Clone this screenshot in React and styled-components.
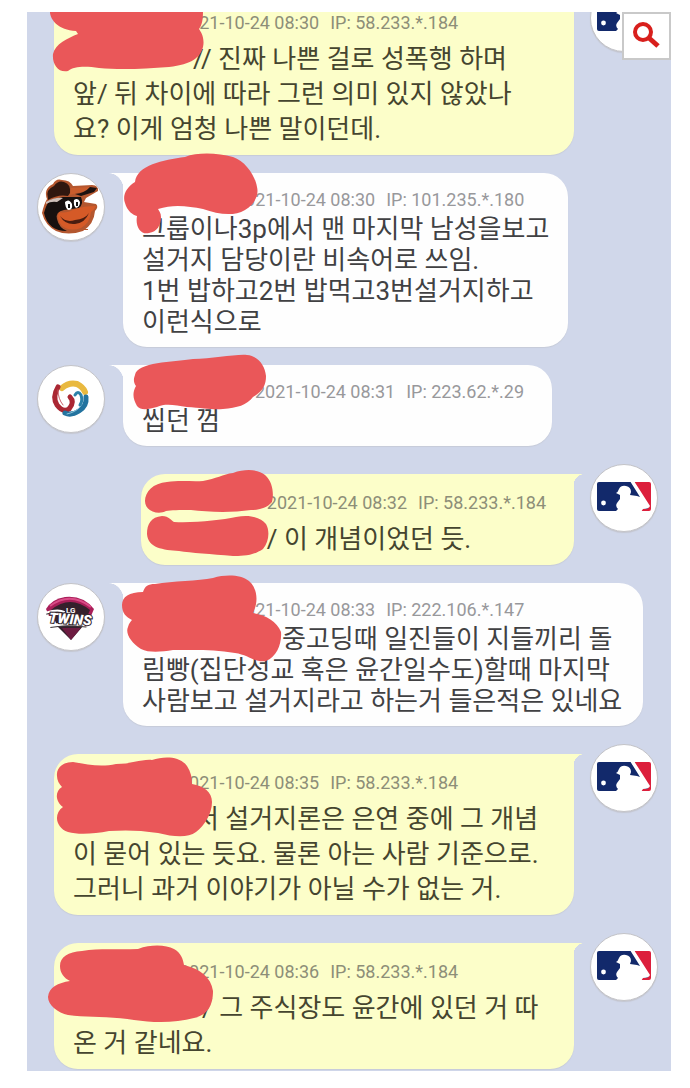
import React from "react";
import styled, { createGlobalStyle, css } from "styled-components";

const GlobalStyle = createGlobalStyle`
  * { box-sizing: border-box; }
  body {
    margin: 0;
    background: #fff;
    font-family: Roboto, "Noto Sans CJK KR", sans-serif;
  }
`;

const Page = styled.main`
  padding: 12px 19px 17px 27px;
`;

const Panel = styled.section`
  position: relative;
  overflow: hidden;
  background: #d0d7ea;
  padding-bottom: 2px;
`;

const Thread = styled.ul`
  display: flex;
  flex-direction: column;
  gap: 18px;
  list-style: none;
  margin: -28px 0 0;
  padding: 0;
`;

const Row = styled.li`
  display: flex;
  align-items: flex-start;
  flex-direction: ${(p) => (p.$mine ? "row-reverse" : "row")};
  gap: ${(p) => (p.$mine ? 16 : 18)}px;
  padding: 0 13px 0 10px;
`;

const Avatar = styled.span`
  flex: none;
  width: 68px;
  height: 68px;
  border-radius: 50%;
  overflow: hidden;
  background: #fff;
  border: 1px solid #c4c4c8;
  box-shadow: 0 1px 1px #c3c6d0;
  svg { display: block; margin: -1px; }
`;

const theirs = css`
  background: #fefefe;
  color: #414143;
  padding: 15px 19px 9px;
  line-height: 31px;
  border-radius: 0 24px 24px 24px;
  &::before {
    left: -14px;
    width: 15px;
    height: 18px;
    background: radial-gradient(ellipse 100% 100% at 0 100%, transparent 97%, #fefefe 100%);
  }
`;

const mine = css`
  background: #fcfec9;
  color: #45452f;
  padding: 17px 19px 8px;
  margin-top: 10px;
  line-height: 35px;
  border-radius: 24px 0 24px 24px;
  &::before {
    right: -10px;
    width: 11px;
    height: 13px;
    background: radial-gradient(ellipse 100% 100% at 100% 100%, transparent 97%, #fcfec9 100%);
  }
`;

const Bubble = styled.article`
  position: relative;
  flex: 0 1 ${(p) => (p.$wide ? "520px" : "auto")};
  font-size: 26px;
  box-shadow: 0 1px 1px #c6cbd9;
  &::before {
    content: "";
    position: absolute;
    top: 0;
  }
  ${(p) => (p.$mine ? mine : theirs)}
`;

const Meta = styled.header`
  display: flex;
  gap: 11px;
  margin-bottom: ${(p) => (p.$mine ? 7 : 2)}px;
  padding-right: 9px;
  font-size: 18px;
  line-height: 24px;
  color: ${(p) => (p.$mine ? "#8d8e78" : "#98989b")};
  white-space: nowrap;
`;

const HiddenName = styled.span`
  flex: none;
  width: ${(p) => p.$width}px;
  margin-right: -11px;
`;

const Body = styled.p`
  margin: 0;
`;

const HiddenWords = styled.span`
  display: inline-block;
  width: ${(p) => p.$width}px;
`;

const Marker = styled.svg`
  position: absolute;
  left: 0;
  top: 0;
  width: 160px;
  height: 90px;
  overflow: visible;
  fill: #ea5759;
`;

const ZoomButton = styled.button`
  position: absolute;
  top: 0;
  right: 0;
  width: 49px;
  height: 48px;
  display: grid;
  place-items: center;
  padding: 0;
  border: 2px solid #c9c9c9;
  background: #fff;
  cursor: pointer;
`;

const BatterLogo = () => (
  <svg width="68" height="68" viewBox="0 0 68 68" aria-hidden="true">
    <path d="M9 18H41L60 45Q59 47 57 47H9Q7 47 7 45V20Q7 18 9 18Z" fill="#12296b" />
    <path d="M44 18H59Q61 18 61 20V45Q61 47 59 47H50V45H57Q59 44 58 42Z" fill="#dc1f3c" />
    <path d="M40 17H44L60 42Q59 45 53 45L51 48H25L28 45Q25 42 27 39L30 35V31L26 29Q28 28 29 25Q31 21 36 22Q41 23 41 28L40 31L47 32L50 33Z" fill="#fff" />
    <circle cx="13.500" cy="39" r="2.400" fill="#fff" />
  </svg>
);

const BirdLogo = () => (
  <svg width="68" height="68" viewBox="0 0 68 68" aria-hidden="true">
    <path d="M5 40Q7 31 10 26Q6 16 16 11Q19 5 25 7Q33 7 36 13L55 12Q62 12 61 18L49 25L47 29L59 31Q62 34 58 38Q57 51 46 58Q31 63 19 58Q8 52 5 40Z" fill="#b4572f" />
    <path d="M7 40Q9 32 13 27L26 24L44 24Q47 31 42 35L27 37Q18 39 20 46Q22 55 30 58Q11 58 7 40Z" fill="#17100f" />
    <path d="M11 25Q8 17 17 13Q21 7 27 9Q34 11 33 20L31 23Q21 21 11 27Z" fill="#30170f" />
    <path d="M34 15L53 14Q49 19 40 20L33 22Z" fill="#c95c2c" />
    <path d="M53 14L60 15L57 19L44 23L38 21Q48 20 53 14Z" fill="#1d1210" />
    <path d="M9 29Q18 24 26 25L20 29Q14 28 9 31Z" fill="#cfc0ba" />
    <path d="M22 39Q29 41 38 36Q47 33 59 33Q57 37 54 39Q53 50 44 55Q33 59 25 53Q19 46 22 39Z" fill="#d55a27" />
    <path d="M23 43Q29 50 38 47Q48 46 52 40Q48 50 38 51Q28 52 23 43Z" fill="#4a1d10" />
    <path d="M28 29Q32 25 35 31Q36 37 31 37Q28 34 28 29ZM37 27Q41 24 43 29Q43 34 39 35Q36 32 37 27Z" fill="#fff" />
    <path d="M31 31h2v4h-2zM39 29h2v4h-2z" fill="#111" />
    <path d="M47 56h4v1h-4z" fill="#b4572f" />
  </svg>
);

const SwirlLogo = () => (
  <svg width="68" height="68" viewBox="0 0 68 68" fill="none" strokeLinecap="round" aria-hidden="true">
    <path d="M25 23Q32 17 40 19Q46 22 48 27" stroke="#e9b93f" strokeWidth="6" />
    <path d="M21 22Q15 32 20 40Q26 48 32 44Q38 37 33 32" stroke="#aa2733" strokeWidth="5" />
    <path d="M21 25Q21 34 26 40" stroke="#c9626b" strokeWidth="1" />
    <path d="M49 32Q50 41 42 46Q34 51 28 48" stroke="#23739f" strokeWidth="5" />
    <path d="M38 30Q41 25 44 30Q46 36 43 40" stroke="#2b81a9" strokeWidth="3" />
    <path d="M30 49Q39 47 43 42" stroke="#8cc5dc" strokeWidth="1" />
  </svg>
);

const TwinsLogo = () => (
  <svg width="68" height="68" viewBox="0 0 68 68" aria-hidden="true">
    <path d="M9 26Q15 16 28 14Q46 12 57 26L54 33H12Z" fill="#a91e59" />
    <path d="M14 27Q33 11 53 27L46 43L34 57L20 43Z" fill="#34202c" />
    <path d="M25 45H44L34 57Z" fill="#6d1b41" />
    <path d="M13 23Q33 8 54 24" fill="none" stroke="#d94b87" strokeWidth="2" />
    <text x="29" y="30" fill="#fff" fontSize="8" fontWeight="700">LG</text>
    <g transform="rotate(4 34 36)">
      <path d="M9 32Q20 27 27 30M12 46Q25 39 53 42" fill="none" stroke="#fff" strokeWidth="3" />
      <path d="M9 33Q20 28 27 31M14 46Q27 42 50 43" fill="none" stroke="#3c3439" strokeWidth="1" />
      <text x="12" y="41" fill="#fff" stroke="#35272f" strokeWidth="2" paintOrder="stroke" fontSize="14" fontWeight="900" fontStyle="italic">TWINS</text>
    </g>
  </svg>
);

const logos = { batter: BatterLogo, bird: BirdLogo, swirl: SwirlLogo, twins: TwinsLogo };

const comments = [
  {
    mine: true, wide: true, logo: "batter", time: "2021-10-24 08:30", ip: "58.233.*.184", name: 106, hidden: 120,
    lines: ["// 진짜 나쁜 걸로 성폭행 하며", "앞/ 뒤 차이에 따라 그런 의미 있지 않았나", "요? 이게 엄청 나쁜 말이던데."],
    marks: ["M-4 14V19C-3 26 4 36 22 37L24 40C14 44 1 50 -1 60C-2 70 4 79 14 77C20 72 32 72 45 74C65 76 90 75 115 73C138 70 146 64 149 53C151 44 147 38 145 35C149 30 149 22 149 14Z"],
  },
  {
    logo: "bird", time: "2021-10-24 08:30", ip: "101.235.*.180", name: 93,
    lines: ["그룹이나3p에서 맨 마지막 남성을보고", "설거지 담당이란 비속어로 쓰임.", "1번 밥하고2번 밥먹고3번설거지하고", "이런식으로"],
    marks: ["M12 9C4 14 -1 22 2 30C4 38 10 42 14 43C12 54 18 62 26 60C34 59 38 52 38 44C38 40 36 38 35 36C50 31 65 33 80 36C95 41 110 44 122 37C132 31 136 22 134 14C132 2 122 -12 110 -16C95 -20 75 -21 62 -16C40 -13 14 -8 12 9Z"],
  },
  {
    logo: "swirl", time: "2021-10-24 08:31", ip: "223.62.*.29", name: 113,
    lines: ["씹던 껌"],
    marks: ["M12 10C10 15 11 18 13 21C9 28 10 34 14 41C18 46 26 44 34 42C42 38 52 40 64 42C80 43 90 45 100 44C114 43 124 40 130 32C140 26 143 20 143 11C142 0 135 -9 124 -10C112 -11 90 -6 70 -6C50 -3 14 -3 12 10Z"],
  },
  {
    mine: true, logo: "batter", time: "2021-10-24 08:32", ip: "58.233.*.184", name: 107, hidden: 107,
    lines: ["/ 이 개념이었던 듯."],
    marks: [
      "M4 27C4 18 12 9 26 8C40 6 52 8 62 7C75 5 82 0 92 -1C106 -6 118 -4 124 1C132 8 133 20 131 28C126 34 118 36 110 36C90 39 66 38 50 36C38 36 30 36 25 37C18 41 4 38 4 27Z",
      "M6 60C6 50 10 43 21 42C28 42 31 47 33 48C55 49 80 46 95 43C110 40 120 44 125 50C129 57 128 68 122 75C112 82 100 82 92 82C70 80 50 79 38 77C22 76 7 74 6 60Z",
    ],
  },
  {
    wide: true, logo: "twins", time: "2021-10-24 08:33", ip: "222.106.*.147", name: 93, hidden: 140,
    lines: ["중고딩때 일진들이 지들끼리 돌", "림빵(집단성교 혹은 윤간일수도)할때 마지막", "사람보고 설거지라고 하는거 들은적은 있네요"],
    marks: ["M-1 22C-1 14 6 9 20 9C22 3 25 1 32 1C50 -2 75 -2 90 -5C104 -9 118 -8 126 -2C134 5 136 18 130 30C142 32 154 38 158 49C159 60 154 74 143 78C132 80 126 72 112 70C90 66 70 67 50 67C38 69 26 70 18 66C8 60 2 50 5 44C6 40 8 38 9 37C3 34 -1 30 -1 22Z"],
  },
  {
    mine: true, wide: true, logo: "batter", time: "2021-10-24 08:35", ip: "58.233.*.184", name: 106, hidden: 122,
    lines: ["서 설거지론은 은연 중에 그 개념", "이 묻어 있는 듯요. 물론 아는 사람 기준으로.", "그러니 과거 이야기가 아닐 수가 없는 거."],
    marks: ["M3 22C2 13 10 8 19 8C35 11 48 13 62 10C78 10 88 5 98 6C110 2 126 2 133 12C137 18 138 24 138 30C150 32 158 38 158 48C158 60 150 72 142 78C134 84 120 83 104 79C85 76 70 76 55 77C40 80 24 81 14 78C2 74 -1 60 9 53C2 48 0 38 8 33C5 30 3 26 3 22Z"],
  },
  {
    mine: true, wide: true, logo: "batter", time: "2021-10-24 08:36", ip: "58.233.*.184", name: 106, hidden: 129,
    lines: ["/ 그 주식장도 윤간에 있던 거 따", "온 거 같네요."],
    marks: ["M6 23C6 14 14 9 28 8C46 5 64 7 84 6C98 1 112 2 120 6C127 10 129 16 130 22C146 26 157 34 159 48C159 62 154 72 140 75C122 80 100 80 80 77C60 73 35 75 14 72C4 70 -6 62 -6 54C-5 44 4 40 16 38C10 35 6 30 6 23Z"],
  },
];

function Comment({ data }) {
  const Logo = logos[data.logo];
  return (
    <Row $mine={data.mine}>
      <Avatar><Logo /></Avatar>
      <Bubble $mine={data.mine} $wide={data.wide}>
        <Meta $mine={data.mine}>
          <HiddenName $width={data.name} />
          <time>{data.time}</time>
          <span>IP: {data.ip}</span>
        </Meta>
        <Body>
          {data.hidden && <HiddenWords $width={data.hidden} />}
          {data.lines.map((line, i) => (
            <React.Fragment key={line}>
              {i > 0 && <br />}
              {line}
            </React.Fragment>
          ))}
        </Body>
        <Marker viewBox="0 0 160 90" aria-hidden="true">
          {data.marks.map((d) => <path key={d} d={d} />)}
        </Marker>
      </Bubble>
    </Row>
  );
}

export default function App() {
  return (
    <>
      <GlobalStyle />
      <Page>
        <Panel>
          <Thread>
            {comments.map((c, i) => <Comment key={i} data={c} />)}
          </Thread>
          <ZoomButton type="button" aria-label="확대">
            <svg width="28" height="28" viewBox="0 0 28 28" fill="none" stroke="#d81f1c" aria-hidden="true">
              <circle cx="10" cy="10" r="8" strokeWidth="4" />
              <path d="M16 16L25 24" strokeWidth="5" />
            </svg>
          </ZoomButton>
        </Panel>
      </Page>
    </>
  );
}
